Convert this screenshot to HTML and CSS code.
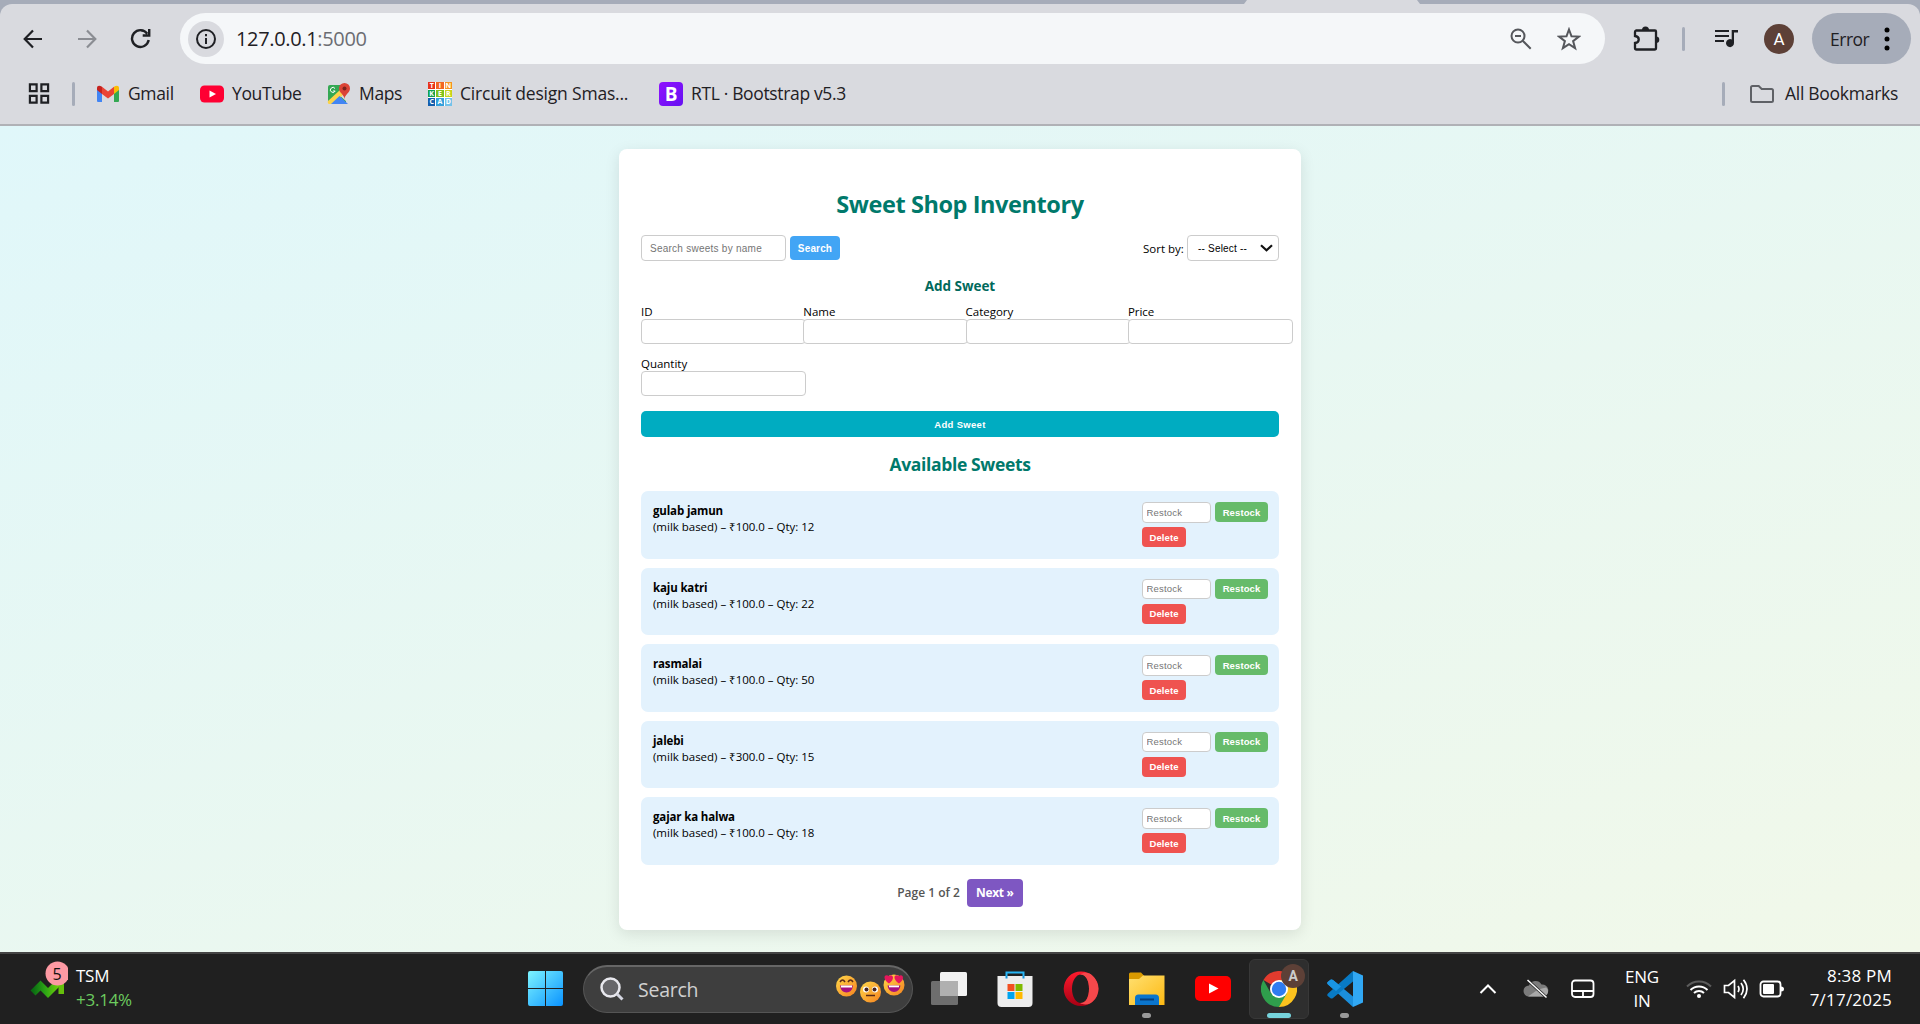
FILE: index.html
```html
<!DOCTYPE html>
<html lang="en">
<head>
<meta charset="utf-8">
<title>Sweet Shop Inventory</title>
<link rel="stylesheet" href="styles.css">
</head>
<body>
<header class="chrome">
  <div class="tabstrip"><div class="active-tab"></div></div>
  <div class="panel">
  <div class="toolbar">
    <svg class="nav-icon back" viewBox="0 0 20 20"><path d="M19 10H2M10 1.5L1.7 10l8.300 8.500" fill="none" stroke="#1f2024" stroke-width="2.200"/></svg>
    <svg class="nav-icon forward" viewBox="0 0 20 20"><path d="M1 10h17M10 1.500l8.300 8.500-8.300 8.500" fill="none" stroke="#8b8d93" stroke-width="2.200"/></svg>
    <svg class="nav-icon reload" viewBox="0 0 20 20"><path d="M17.800 11.500A8 8 0 1 1 16.500 5.500M18.300 1v6.200h-6.200" fill="none" stroke="#1f2024" stroke-width="2.300"/></svg>
    <div class="omnibox">
      <span class="info"><svg width="22" height="22" viewBox="0 0 22 22"><circle cx="11" cy="11" r="9" fill="none" stroke="#1f2024" stroke-width="2"/><path d="M11 10v6M11 6v2.200" stroke="#1f2024" stroke-width="2"/></svg></span>
      <span class="url">127.0.0.1<span class="port">:5000</span></span>
      <svg class="mag" width="22" height="22" viewBox="0 0 22 22"><circle cx="8" cy="8" r="6.500" fill="none" stroke="#55575c" stroke-width="2"/><path d="M5 8h6M12.700 12.700l8 8" stroke="#55575c" stroke-width="2"/></svg>
      <svg class="star" width="24" height="24" viewBox="0 0 24 24"><path d="M12 2.500l2.500 6.800 7.300.3-5.700 4.500 2 7-6.100-4-6.100 4 2-7L2.200 9.600l7.300-.3z" fill="none" stroke="#55575c" stroke-width="2"/></svg>
    </div>
    <svg class="puzzle" width="27" height="27" viewBox="0 0 27 27"><path d="M3 5.500h19a1 1 0 0 1 1 1V23a1.500 1.500 0 0 1-1.500 1.500H3.500A1.500 1.500 0 0 1 2 23v-5c5-.5 5-6.500 0-7V7a1.500 1.500 0 0 1 1-1.500z" fill="none" stroke="#1f2024" stroke-width="2.300"/><path d="M9 5a3.500 3.500 0 0 1 7 0zM23 11.500a3.300 3.300 0 0 1 0 6.600z" fill="#1f2024"/></svg>
    <i class="sep sep-top"></i>
    <svg class="music" width="25" height="20" viewBox="0 0 25 20"><path d="M1 2h14M1 7h14M1 12h9" stroke="#1f2024" stroke-width="2"/><path d="M24 1v2.500h-4V14a4 4 0 1 1-2.300-3.500V1z" fill="#1f2024"/></svg>
    <span class="avatar">A</span>
    <div class="error"><span>Error</span><svg width="6" height="24" viewBox="0 0 6 24"><circle cx="3" cy="3" r="2.500"/><circle cx="3" cy="12" r="2.500"/><circle cx="3" cy="21" r="2.500"/></svg></div>
  </div>
  <nav class="bookmarks">
    <svg class="apps" width="23" height="23" viewBox="0 0 23 23"><path d="M2 2h7v7H2zM14 2h7v7h-7zM2 14h7v7H2zM14 14h7v7h-7z" fill="none" stroke="#1f2024" stroke-width="2.300"/></svg>
    <i class="sep"></i>
    <a class="bm gmail"><svg width="24" height="24" viewBox="0 0 24 24"><path d="M1 6v13a1 1 0 0 0 1 1h4V10z" fill="#4285f4"/><path d="M18 10v10h4a1 1 0 0 0 1-1V6z" fill="#34a853"/><path d="M6 4.800l6 4.700 6-4.700V12l-6 4.600L6 12z" fill="#ea4335"/><path d="M1 6c0-2.500 2.500-3 5-1.200V12L1 8z" fill="#c5221f"/><path d="M23 6c0-2.500-2.500-3-5-1.200V12l5-4z" fill="#fbbc04"/></svg><span>Gmail</span></a>
    <a class="bm youtube"><svg width="24" height="24" viewBox="0 0 24 24"><rect y="3.500" width="24" height="17" rx="4.500" fill="#ff0033"/><path d="M9.500 8.500l6.500 3.500-6.500 3.500z" fill="#fff"/></svg><span>YouTube</span></a>
    <a class="bm maps"><svg width="24" height="24" viewBox="0 0 24 24"><path d="M3 3h16v17H3a2 2 0 0 1-2-2V5a2 2 0 0 1 2-2z" fill="#34a853"/><path d="M20 10v10L11 12z" fill="#dcdcdc"/><path d="M1 19L13 8l4 4L6 22H3a2 2 0 0 1-2-3z" fill="#fbd24a"/><path d="M4 22l8.500-8L21 22z" fill="#4285f4"/><path d="M17.500 17c-.5-5-5.500-6-5.500-10.500a5.500 5.500 0 0 1 11 0C23 11 18 12 17.500 17z" fill="#db4437"/><circle cx="17.500" cy="6.500" r="2" fill="#7b231d"/><path d="M8 6.500A2.500 2.500 0 1 0 8.200 9H6" fill="none" stroke="#fff"/></svg><span>Maps</span></a>
    <a class="bm tinker"><span class="tiles"><b class="t1">T</b><b class="t2">I</b><b class="t3">N</b><b class="t4">K</b><b class="t5">E</b><b class="t6">R</b><b class="t7">C</b><b class="t8">A</b><b class="t9">D</b></span><span>Circuit design Smas...</span></a>
    <a class="bm boot"><b class="boot-logo">B</b><span>RTL · Bootstrap v5.3</span></a>
    <i class="sep sep-all"></i>
    <a class="bm all"><svg width="26" height="20" viewBox="0 0 26 20"><path d="M3.500 2h6.200l3 3h9.800a1.500 1.500 0 0 1 1.500 1.500v10a1.500 1.500 0 0 1-1.500 1.500h-19A1.500 1.500 0 0 1 2 16.500v-13A1.500 1.500 0 0 1 3.500 2z" fill="none" stroke="#5f6166" stroke-width="2"/></svg><span>All Bookmarks</span></a>
  </nav>
  </div>
</header>

<main class="page">
  <section class="card">
    <h1>Sweet Shop Inventory</h1>
    <div class="controls">
      <input class="search" type="text" placeholder="Search sweets by name"><button class="btn search-btn">Search</button>
      <span class="sort-label">Sort by:</span>
      <div class="select"><span>-- Select --</span><svg width="13" height="8" viewBox="0 0 13 8"><path d="M1 1.200l5.500 5 5.500-5" fill="none" stroke="#111" stroke-width="2.200"/></svg></div>
    </div>
    <h3>Add Sweet</h3>
    <div class="fields">
      <label>ID<input type="text"></label>
      <label>Name<input type="text"></label>
      <label>Category<input type="text"></label>
      <label>Price<input type="text"></label>
      <label>Quantity<input type="text"></label>
    </div>
    <button class="btn add">Add Sweet</button>
    <h2>Available Sweets</h2>
    <ul class="list">
      <li><div class="info-text"><strong>gulab jamun</strong><span>(milk based) – ₹100.0 – Qty: 12</span></div><div class="actions"><input type="text" placeholder="Restock"><button class="btn restock">Restock</button><button class="btn delete">Delete</button></div></li>
      <li><div class="info-text"><strong>kaju katri</strong><span>(milk based) – ₹100.0 – Qty: 22</span></div><div class="actions"><input type="text" placeholder="Restock"><button class="btn restock">Restock</button><button class="btn delete">Delete</button></div></li>
      <li><div class="info-text"><strong>rasmalai</strong><span>(milk based) – ₹100.0 – Qty: 50</span></div><div class="actions"><input type="text" placeholder="Restock"><button class="btn restock">Restock</button><button class="btn delete">Delete</button></div></li>
      <li><div class="info-text"><strong>jalebi</strong><span>(milk based) – ₹300.0 – Qty: 15</span></div><div class="actions"><input type="text" placeholder="Restock"><button class="btn restock">Restock</button><button class="btn delete">Delete</button></div></li>
      <li><div class="info-text"><strong>gajar ka halwa</strong><span>(milk based) – ₹100.0 – Qty: 18</span></div><div class="actions"><input type="text" placeholder="Restock"><button class="btn restock">Restock</button><button class="btn delete">Delete</button></div></li>
    </ul>
    <div class="pager"><span>Page 1 of 2</span><a class="next">Next »</a></div>
  </section>
</main>

<footer class="taskbar">
  <div class="widget">
    <svg width="50" height="48" viewBox="0 0 50 48"><defs><linearGradient id="gr"><stop offset="0" stop-color="#0a6b12"/><stop offset=".45" stop-color="#2aa316"/><stop offset="1" stop-color="#72d00a"/></linearGradient></defs><path d="M15 35l7.500-7.500 7.500 7.500 11-11" fill="none" stroke="url(#gr)" stroke-width="7"/><path d="M29 20h17v16h-5.500V26z" fill="#66bf0c"/><circle cx="39.500" cy="15.500" r="12" fill="#fd99a3"/></svg>
    <span class="badge">5</span>
    <div class="stock"><span>TSM</span><span class="up">+3.14%</span></div>
  </div>
  <svg class="start" width="35" height="35" viewBox="0 0 35 35"><defs><linearGradient id="wi" gradientUnits="userSpaceOnUse" x1="0" y1="0" x2="35" y2="35"><stop offset="0" stop-color="#7df4ff"/><stop offset="1" stop-color="#0a93ff"/></linearGradient></defs><path d="M2 0h15v17H0V2a2 2 0 0 1 2-2zM18 0h15a2 2 0 0 1 2 2v15H18zM0 18h17v17H2a2 2 0 0 1-2-2zM18 18h17v15a2 2 0 0 1-2 2H18z" fill="url(#wi)"/></svg>
  <div class="tsearch">
    <svg class="tmag" width="24" height="24" viewBox="0 0 24 24"><circle cx="10.500" cy="10.500" r="9" fill="#66666a" stroke="#e8e8ee" stroke-width="2.500"/><path d="M17 17l5.500 5.500" stroke="#d5d7e2" stroke-width="3"/></svg>
    <span>Search</span>
    <svg class="emoji" width="70" height="30" viewBox="0 0 70 30"><defs><linearGradient id="em" x1="0" y1="0" x2="1" y2="1"><stop offset="0" stop-color="#ffd84a"/><stop offset="1" stop-color="#f58220"/></linearGradient></defs>
      <circle cx="10.500" cy="12" r="10.500" fill="url(#em)"/><path d="M4 8q2.500-4 5 0M12 8q2.500-4 5 0" fill="none" stroke="#5a2a18" stroke-width="1.500"/><path d="M4 11.500h13q-1 7-6.500 7T4 11.500z" fill="#a5107f"/><path d="M5 11.500h11v2H5z" fill="#fff"/>
      <circle cx="34.500" cy="18" r="10.500" fill="url(#em)"/><circle cx="30" cy="15.500" r="3" fill="#fff"/><circle cx="39" cy="15.500" r="3" fill="#fff"/><circle cx="30.500" cy="15.500" r="2" fill="#452423"/><circle cx="38.500" cy="15.500" r="2" fill="#452423"/><path d="M30 21.500h9" stroke="#5a2a18" stroke-width="1.500"/>
      <circle cx="58" cy="11" r="10.500" fill="url(#em)"/><path d="M53 9.500C46 5 48-.5 53 2c4-2.500 6.500 3 0 7.500zM63 9.500c-7-4.500-5-10 0-7.500 4-2.500 6.500 3 0 7.500z" fill="#e6175c"/><path d="M51.500 11.500h13q-1 6.500-6.500 6.500t-6.500-6.500z" fill="#a5107f"/><path d="M53 11.500h10v1.800H53z" fill="#fff"/></svg>
  </div>
  <div class="tasks">
    <span class="app"><svg width="36" height="36" viewBox="0 0 36 36"><rect x="9" y="1" width="27" height="24" rx="1.500" fill="#f2f2f2"/><rect x="0" y="10" width="27" height="24" rx="1.500" fill="#6e6e6e"/><path d="M9 10h18v15H9z" fill="#b0b0b0"/></svg></span>
    <span class="app"><svg width="36" height="36" viewBox="0 0 36 36"><path d="M9.500 8V1.500h17V8" fill="none" stroke="#27b5f5" stroke-width="2"/><path d="M.5 5h35v27a4 4 0 0 1-4 4h-27a4 4 0 0 1-4-4z" fill="#ededed"/><path d="M9.500 5v2.500M26.500 5v2.500" stroke="#1595dd" stroke-width="2"/><path d="M10.500 13h7v7h-7z" fill="#f25022"/><path d="M18.500 13h7v7h-7z" fill="#7fba00"/><path d="M10.500 21h7v7h-7z" fill="#00a4ef"/><path d="M18.500 21h7v7h-7z" fill="#ffb900"/></svg></span>
    <span class="app"><svg width="36" height="36" viewBox="0 0 36 36"><defs><linearGradient id="op" x1="0" y1="0" x2="0" y2="1"><stop offset="0" stop-color="#ff1b2d"/><stop offset="1" stop-color="#a70014"/></linearGradient></defs><path d="M18 .5a17.300 17.300 0 1 0 0 34.600 17.300 17.300 0 0 0 0-34.600zm0 3c5 0 8 6.300 8 14.300s-3 14.300-8 14.300-9-6.300-9-14.300 4-14.300 9-14.300z" fill="url(#op)" fill-rule="evenodd"/><path d="M17 3.500C22 .5 27 2 29.500 4.800a17 17 0 0 1 0 26C27 33.500 21 34.500 17 32c6 0 9-6.300 9-14.300s-3-14.200-9-14.200z" fill="#f5484b"/></svg></span>
    <span class="app run"><svg width="36" height="36" viewBox="0 0 36 36"><defs><linearGradient id="fo" x1="0" y1="0" x2="1" y2="1"><stop offset="0" stop-color="#ffe070"/><stop offset="1" stop-color="#fdb913"/></linearGradient></defs><path d="M0 10V3a1.500 1.500 0 0 1 1.500-1.500H12l3.500 3.800L12 10z" fill="#d99a00"/><path d="M0 8h10l4-3.500h21.500V34H0z" fill="url(#fo)"/><path d="M6 34V27a3.500 3.500 0 0 1 3.500-3.500h17A3.500 3.500 0 0 1 30 27v7z" fill="#0b75cc"/><path d="M11 28.500h14" stroke="#073f7b" stroke-width="2"/></svg></span>
    <span class="app"><svg width="36" height="36" viewBox="0 0 36 36"><rect y="5" width="36" height="25" rx="5" fill="#f00"/><path d="M14 12.500l9.500 5-9.500 5z" fill="#fff"/></svg></span>
    <span class="app active"><svg width="36" height="36" viewBox="0 0 36 36"><path d="M18 18L2.400 9A18 18 0 0 1 33.600 9z" fill="#e33b2e"/><path d="M18 18L18 9h15.600A18 18 0 0 1 18 36z" fill="#fcc31e"/><path d="M2.400 9A18 18 0 0 0 18 36l7.800-13.500H10z" fill="#2f9e4c"/><circle cx="18" cy="18" r="9" fill="#fff"/><circle cx="18" cy="18" r="7.200" fill="#2f7cf0"/></svg><b class="profile">A</b></span>
    <span class="app run"><svg width="36" height="36" viewBox="0 0 36 36"><path d="M1 13.500Q-.5 12 1 10.800L3.500 8.800Q4.800 8 6 9l20 16.500V36z" fill="#1b8fdc"/><path d="M1 22.500Q-.5 24 1 25.200l2.500 2Q4.800 28 6 27l20-16.500V0z" fill="#087ac4"/><path d="M1 13.500Q-.5 12 1 10.800L3.500 8.800Q4.800 8 6 9l8 6.600-5 4.300z" fill="#1995e4"/><path d="M26 0l10 4.500v27L26 36z" fill="#31a8f4"/></svg></span>
  </div>
  <div class="tray">
    <svg class="chev" width="18" height="12" viewBox="0 0 18 12"><path d="M1.500 10L9 2.500l7.500 7.500" fill="none" stroke="#fff" stroke-width="2"/></svg>
    <svg class="cloud" width="26" height="20" viewBox="0 0 26 20"><path d="M6 17.500a5.500 5.500 0 0 1 0-11 7 7 0 0 1 12.500-1A6 6 0 0 1 20 17.500z" fill="#7b7b7b"/><path d="M5 17.500l10-7 8-2a5 5 0 0 1-3 9z" fill="#a9a9a9"/><path d="M4.500 1l19 17.500" stroke="#222" stroke-width="3"/><path d="M4.500 1l19 17.500" stroke="#fff" stroke-width="1.500"/></svg>
    <svg class="pad" width="24" height="20" viewBox="0 0 24 20"><rect x="1" y="1.500" width="21.500" height="16.500" rx="3" fill="none" stroke="#fff" stroke-width="1.800"/><path d="M1 12h22M12 12v6" stroke="#fff" stroke-width="1.800"/></svg>
    <div class="lang"><span>ENG</span><span>IN</span></div>
    <svg class="wifi" width="26" height="20" viewBox="0 0 26 20"><g fill="none" stroke="#fff" stroke-width="2"><path d="M1 7.500a17 17 0 0 1 24 0" stroke="#5c5c5c"/><path d="M4.500 11a12 12 0 0 1 17 0M8 14a7.300 7.300 0 0 1 10 0"/></g><circle cx="13" cy="17" r="2" fill="#fff"/></svg>
    <svg class="vol" width="26" height="22" viewBox="0 0 26 22"><path d="M1.500 7.500h4l6-5v17l-6-5h-4zM15 8q2 3 0 6M18 5q4.500 6 0 12M20.500 1.800q7 9 0 18.400" fill="none" stroke="#fff" stroke-width="1.700"/></svg>
    <svg class="bat" width="26" height="18" viewBox="0 0 26 18"><rect x="1.500" y="1.500" width="20" height="15" rx="3" fill="none" stroke="#fff" stroke-width="1.800"/><rect x="4" y="4" width="11" height="10" rx="1" fill="#fff"/><path d="M22 6.500q3 0 3 2.500t-3 2.500z" fill="#fff"/></svg>
    <div class="clock"><span>8:38 PM</span><span>7/17/2025</span></div>
  </div>
</footer>
</body>
</html>
```

FILE: styles.css
```css
* { box-sizing: border-box; }
body {
  margin: 0; width: 1920px; height: 1024px; overflow: hidden;
  display: flex; flex-direction: column;
  font-family: "Open Sans", "Noto Sans", sans-serif;
}
svg { display: block; flex: none; }
span, a, b { white-space: nowrap; }

/* browser chrome */
.chrome { height: 126px; flex: none; background: #a6acb9; border-bottom: 2px solid #b0b1b6; display: flex; flex-direction: column; }
.tabstrip { height: 4px; display: flex; }
.active-tab { width: 176px; margin-left: 1244px; background: #d9dadf; clip-path: polygon(3px 0, 173px 0, 100% 100%, 0 100%); }
.panel { flex: 1; background: #d9dadf; border-radius: 12px 12px 0 0; }
.toolbar { height: 69px; display: flex; align-items: center; }
.nav-icon { width: 20px; height: 20px; }
.back { margin-left: 23px; }
.forward { margin-left: 34px; }
.reload { margin-left: 33px; width: 21px; height: 21px; }
.omnibox { margin-left: 29px; width: 1425px; height: 51px; border-radius: 26px; background: #f5f7f9; display: flex; align-items: center; }
.info { width: 36px; height: 36px; margin-left: 8px; border-radius: 50%; background: #d9dadf; display: grid; place-items: center; }
.url { margin-left: 12px; font-size: 20px; letter-spacing: -.34px; color: #1f2024; padding-bottom: 1px; }
.port { color: #6b6d73; }
.mag { margin-left: auto; }
.star { margin: 0 24px 0 25px; }
.puzzle { margin-left: 28px; }
.sep { width: 3px; height: 24px; background: #a6acb9; border-radius: 2px; flex: none; }
.sep-top { margin-left: 22px; }
.music { margin-left: 29px; }
.avatar { margin-left: 25px; width: 30px; height: 30px; border-radius: 50%; background: #5d4037; color: #fff; font: 17px/30px Roboto, sans-serif; text-align: center; }
.error { margin-left: 18px; width: 99px; height: 51px; border-radius: 26px; background: #a6acb9; display: flex; align-items: center; font-size: 17.500px; letter-spacing: -.5px; color: #1f2024; }
.error span { width: 54px; margin-left: 18px; }

.bookmarks { height: 41px; display: flex; align-items: center; font-size: 17.500px; letter-spacing: -.35px; color: #1f2024; }
.apps { margin: 0 22px 0 28px; width: 22px; }
.bm { display: flex; align-items: center; }
.bm svg, .tiles, .boot-logo { margin-right: 8px; }
.bm span { padding-bottom: 1px; }
.gmail { margin-left: 21px; width: 104px; }
.youtube { width: 127px; }
.maps { width: 101px; }
.tinker { width: 231px; letter-spacing: -.2px; }
.boot { width: 260px; }
.bm .tiles { width: 24px; height: 24px; padding: 0; display: grid; grid-template-columns: repeat(3, 1fr); gap: 1px; background: #fff; }
.tiles b { font-size: 7px; line-height: 7.300px; color: #fff; text-align: center; letter-spacing: 0; }
.t1 { background: #e8321c; } .t2 { background: #f26522; } .t3 { background: #f7941e; }
.t4 { background: #13a150; } .t5 { background: #7fc31c; } .t6 { background: #c9d51a; }
.t7 { background: #135fae; } .t8 { background: #34a0dc; } .t9 { background: #72c2ea; }
.boot-logo { width: 24px; height: 24px; border-radius: 4px; background: linear-gradient(135deg, #9013fe, #6610f2); color: #fff; font-size: 19px; line-height: 24px; text-align: center; }
.sep-all { margin-left: auto; }
.all { margin: 0 22px 0 24px; }
.all svg { margin-right: 10px; }
.all span { letter-spacing: -.28px; }

/* page */
.page { height: 826px; flex: none; padding-top: 23px; display: flex; justify-content: center; align-items: flex-start; background: linear-gradient(160deg, #e0f7fa, #f1f8e9); }
.card { width: 682px; height: 781px; padding: 0 22px; background: #fff; border-radius: 8px; box-shadow: 0 4px 15px rgba(0,0,0,.1); font-size: 11.500px; color: #000; }
h1, h2, h3 { margin: 0; text-align: center; white-space: nowrap; }
h1 { margin-top: 38px; height: 48px; font-size: 23.500px; line-height: 34px; color: #00796b; letter-spacing: -.42px; }
.controls { display: flex; align-items: center; height: 26px; }
input { font-family: "Liberation Sans", Arial, sans-serif; border: 1px solid #ccc; border-radius: 4px; background: #fff; margin: 0; outline: 0; }
input::placeholder { color: #757575; }
.search { width: 145px; height: 26px; padding: 0 8px; font-size: 10px; letter-spacing: .25px; }
.btn { border: 0; border-radius: 4px; color: #fff; font: bold 10px "Liberation Sans", Arial, sans-serif; padding: 0; margin: 0; text-align: center; }
.search-btn { width: 50px; height: 24px; margin-left: 4px; background: #42a5f5; letter-spacing: .15px; }
.sort-label { margin-left: auto; width: 44px; letter-spacing: 0; }
.select { width: 92px; height: 26px; border: 1px solid #ccc; border-radius: 4px; display: flex; align-items: center; justify-content: space-between; padding: 0 5px 0 10px; font: 10px "Liberation Sans", Arial, sans-serif; letter-spacing: .2px; }
h3 { margin-top: 15px; font-size: 13.500px; line-height: 20px; color: #00695c; letter-spacing: -.05px; }
.fields { display: grid; grid-template-columns: repeat(4, 162.300px); row-gap: 11px; margin-top: 8px; height: 92px; }
.fields label { height: 40px; line-height: 15px; letter-spacing: -.02px; }
.fields input { display: block; width: 165px; height: 25px; }
.add { display: block; width: 638px; height: 26px; margin-top: 15px; border-radius: 5px; background: #00acc1; font-size: 9.500px; letter-spacing: .3px; }
h2 { margin-top: 15px; font-size: 17.500px; line-height: 25px; color: #00796b; letter-spacing: -.35px; }
.list { list-style: none; margin: 14px 0 0; padding: 0; display: flex; flex-direction: column; gap: 9px; }
.list li { height: 67.500px; background: #e3f2fd; border-radius: 7px; padding: 11px 11px 0 12px; display: flex; justify-content: space-between; }
.info-text { display: flex; flex-direction: column; line-height: 16px; padding-top: 1px; letter-spacing: -.02px; }
.info-text strong { letter-spacing: -.15px; }
.actions { width: 126px; display: flex; flex-wrap: wrap; align-content: flex-start; gap: 4.500px 4px; }
.actions input { width: 69px; height: 20.500px; padding: 0 4px 0 3.500px; font-size: 9.500px; letter-spacing: .2px; }
.actions .btn { height: 20px; font-size: 9.500px; letter-spacing: .1px; }
.actions .restock { width: 53px; background: #66bb6a; }
.actions .delete { width: 44px; background: #ef5350; }
.pager { display: flex; justify-content: center; align-items: center; gap: 7px; margin-top: 13.500px; height: 29px; color: #555; font-size: 12px; font-weight: 600; }
.next { width: 56px; height: 28px; line-height: 28px; border-radius: 4px; background: #7e57c2; color: #fff; text-align: center; font-weight: 700; letter-spacing: -.3px; }

/* taskbar */
.taskbar { height: 72px; flex: none; background: #202020; border-top: 2px solid #444; display: flex; align-items: center; padding-bottom: 1px; color: #fff; font-size: 17px; letter-spacing: -.25px; }
.widget { position: relative; width: 528px; height: 69px; display: flex; padding: 4px 0 0 18px; }
.badge { position: absolute; left: 45px; top: 7.500px; width: 24px; line-height: 24px; text-align: center; color: #111; font-size: 16px; }
.stock { display: flex; flex-direction: column; line-height: 24px; margin: 6px 0 0 8px; }
.up { color: #6ccb5f; }
.tsearch { width: 330px; height: 48px; margin-left: 20px; border-radius: 24px; background: #3e3e3e; border: 1px solid #555; border-top: 2px solid #666; display: flex; align-items: center; color: #d0d0d0; font-size: 19.500px; }
.tmag { margin: 0 14px 0 16px; }
.emoji { margin: 0 6px 0 auto; }
.tasks { display: flex; margin-left: 3px; height: 60px; }
.app { position: relative; width: 60px; height: 60px; margin: 0 3px; display: grid; place-items: center; border-radius: 6px; }
.active { background: #2e2e2e; border: 1px solid #383838; }
.run::after, .active::after { content: ""; position: absolute; bottom: 1px; left: 25px; width: 9px; height: 5px; border-radius: 3px; background: #999; }
.active::after { left: 17px; bottom: 0; width: 24px; background: #76d3dc; }
.profile { position: absolute; left: 31px; top: 4px; width: 24px; height: 24px; border-radius: 50%; background: #5d4037; color: #ccc; font: bold 14px/24px Roboto, sans-serif; text-align: center; }
.tray { margin-left: auto; padding-right: 28px; display: flex; align-items: center; }
.chev { margin-right: 26px; }
.cloud { margin-right: 22px; }
.pad { margin-right: 16px; }
.lang { width: 62px; margin-right: 13px; display: flex; flex-direction: column; align-items: center; line-height: 23.500px; }
.wifi { margin-right: 11px; }
.vol { margin-right: 10px; }
.clock { width: 107px; display: flex; flex-direction: column; align-items: flex-end; line-height: 24px; padding-bottom: 1px; letter-spacing: .2px; }
```
